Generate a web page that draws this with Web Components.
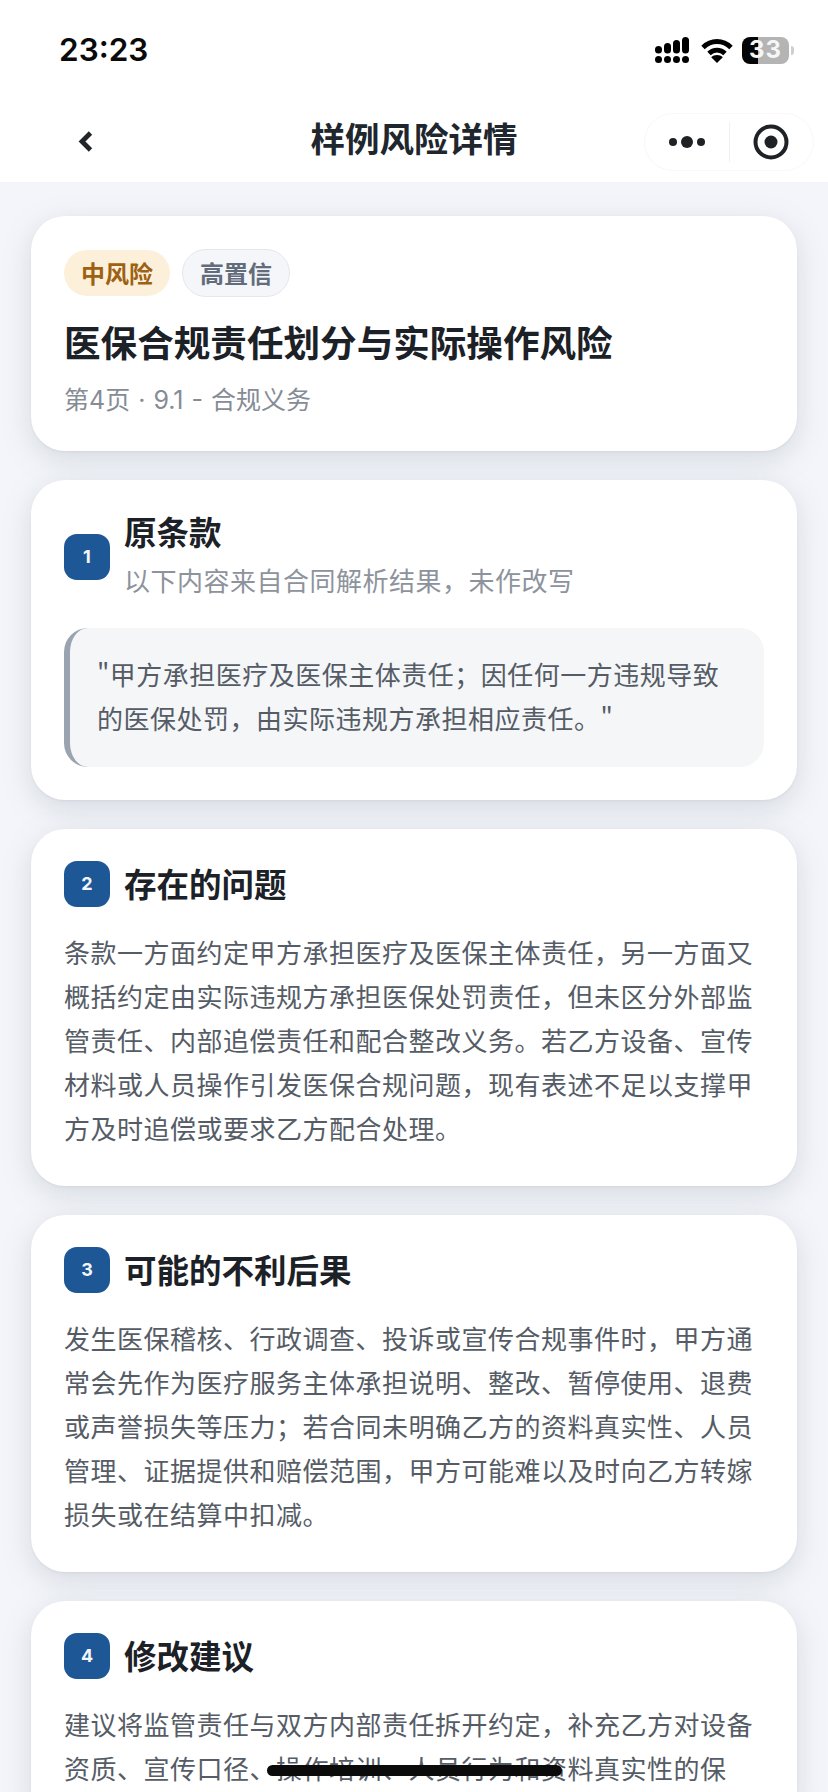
<!DOCTYPE html>
<html lang="zh-CN">
<head>
<meta charset="utf-8">
<title>样例风险详情</title>
<style>
html,body{margin:0;padding:0;background:#eef1f6;}
body{width:828px;height:1792px;overflow:hidden;font-family:"Noto Sans CJK SC","Noto Sans",sans-serif;}
</style>
</head>
<body>
<phone-page>
  <status-bar slot="top"></status-bar>
  <nav-bar slot="top">样例风险详情</nav-bar>
  <summary-card></summary-card>
  <section-card num="1" heading="原条款" sub="以下内容来自合同解析结果，未作改写">
    <clause-quote>"甲方承担医疗及医保主体责任；因任何一方违规导致的医保处罚，由实际违规方承担相应责任。"</clause-quote>
  </section-card>
  <section-card num="2" heading="存在的问题">条款一方面约定甲方承担医疗及医保主体责任，另一方面又概括约定由实际违规方承担医保处罚责任，但未区分外部监管责任、内部追偿责任和配合整改义务。若乙方设备、宣传材料或人员操作引发医保合规问题，现有表述不足以支撑甲方及时追偿或要求乙方配合处理。</section-card>
  <section-card num="3" heading="可能的不利后果">发生医保稽核、行政调查、投诉或宣传合规事件时，甲方通常会先作为医疗服务主体承担说明、整改、暂停使用、退费或声誉损失等压力；若合同未明确乙方的资料真实性、人员管理、证据提供和赔偿范围，甲方可能难以及时向乙方转嫁损失或在结算中扣减。</section-card>
  <section-card num="4" heading="修改建议">建议将监管责任与双方内部责任拆开约定，补充乙方对设备资质、宣传口径、操作培训、人员行为和资料真实性的保</section-card>
  <home-indicator slot="over"></home-indicator>
</phone-page>
<script>
function def(name, css, html){
  class E extends HTMLElement{
    constructor(){super();const r=this.attachShadow({mode:"open"});
      r.innerHTML="<style>"+css+"</style>"+(typeof html==="function"?html(this):html);}
  }
  customElements.define(name,E);
}
def("phone-page",`
:host{display:block;position:relative;width:828px;height:1792px;overflow:hidden;background:#f3f5fa;}
main{display:flex;flex-direction:column;gap:29px;padding:34px 31px 0;}
.top{position:relative;z-index:1;}
`,`<div class="top"><slot name="top"></slot></div><main><slot></slot></main><slot name="over"></slot>`);

def("status-bar",`
:host{display:flex;align-items:center;justify-content:space-between;height:90px;background:#fff;box-sizing:border-box;padding:10px 34px 0 59px;}
.t{font:600 31.5px/1 Inter,"Liberation Sans",sans-serif;color:#0a0a0a;}
.i{display:flex;align-items:center;}
.bat{width:47px;height:27px;border-radius:8px;background:linear-gradient(90deg,#050505 0 16px,#b4b4b4 16px);display:flex;align-items:center;justify-content:center;font:700 24px/1 Inter,"Liberation Sans",sans-serif;color:#f6f6f6;letter-spacing:1px;}
.wrap{display:flex;align-items:center;gap:2px;margin-left:9px;}
.nub{width:3px;height:9px;background:#cfcfcf;border-radius:0 3px 3px 0;}
svg{display:block;}
svg.w{margin-left:12px;}
`,`<span class="t">23:23</span><span class="i">
<svg width="34" height="26" viewBox="0 0 34 26" fill="#000">
<rect x="0" y="9" width="7" height="7.5" rx="3.5"/><circle cx="3.5" cy="22.5" r="3.5"/>
<rect x="9" y="6" width="7" height="10.5" rx="3.5"/><circle cx="12.5" cy="22.5" r="3.5"/>
<rect x="18" y="3" width="7" height="13.5" rx="3.5"/><circle cx="21.5" cy="22.5" r="3.5"/>
<rect x="27" y="0" width="7" height="16.5" rx="3.5"/><circle cx="30.5" cy="22.5" r="3.5"/>
</svg>
<svg class="w" width="32" height="25" viewBox="0 0 32 25" fill="none" stroke="#000" stroke-width="4.8">
<path d="M2 9.5C10 1.5 22 1.5 30 9.5"/><path d="M8 15.5C12.5 11 19.5 11 24 15.5"/><path d="M16 25l-5.8-5.8c3-2.8 8.6-2.8 11.6 0z" fill="#000" stroke="none"/>
</svg>
<span class="wrap"><span class="bat">33</span><span class="nub"></span></span>
</span>`);

def("nav-bar",`
:host{display:flex;align-items:center;justify-content:center;position:relative;height:92px;background:#fff;font:700 34.5px/1 "Noto Sans CJK SC",sans-serif;color:#20262d;}
.t{position:relative;top:1px;}
.back{position:absolute;left:78px;top:41px;}
.cap{position:absolute;left:644px;top:23px;width:170px;height:58px;box-sizing:border-box;border:1px solid #f8f8f9;border-radius:29px;display:flex;align-items:center;}
.a{flex:1;display:flex;align-items:center;justify-content:center;gap:4px;height:40px;}
.d{width:8px;height:8px;border-radius:50%;background:#1e2125;}
.d.m{width:12px;height:12px;}
.sep{width:1px;height:40px;background:#eff0f0;}
.b{flex:1;display:flex;justify-content:center;}
svg{display:block;}
`,`<svg class="back" width="15" height="21" viewBox="0 0 15 21" fill="none" stroke="#22262b" stroke-width="4.8"><path d="M12.5 2L4 10.5l8.5 8.5"/></svg>
<span class="t"><slot></slot></span>
<div class="cap"><div class="a"><i class="d"></i><i class="d m"></i><i class="d"></i></div><div class="sep"></div><div class="b">
<svg width="36" height="36" viewBox="0 0 36 36"><circle cx="18" cy="18" r="15.5" fill="none" stroke="#1e2125" stroke-width="4"/><circle cx="18" cy="18" r="6.5" fill="#1e2125"/></svg></div></div>`);

const cardBox=`display:block;box-sizing:border-box;background:#fff;border-radius:34px;box-shadow:0 8px 28px rgba(130,140,150,.26),0 1px 2px rgba(130,140,150,.12);`;

def("summary-card",`
:host{${cardBox}padding:33px 33px 32px;height:235px;}
.p{display:flex;gap:12px;align-items:center;}
.pill{height:46px;box-sizing:border-box;border-radius:23px;padding:0 17px;display:flex;align-items:center;font:700 24px/1 "Noto Sans CJK SC",sans-serif;}
.m{background:#fdf0da;color:#9c6113;}
.h{background:#f4f6f9;color:#626c7a;border:1.5px solid #e4e7ec;height:48px;border-radius:24px;}
h1{margin:20px 0 0;font:700 36.6px/50px "Noto Sans CJK SC",sans-serif;color:#1c2127;}
.s{margin-top:15px;font:400 25px/36px Inter,"Noto Sans CJK SC",sans-serif;word-spacing:1px;color:#858c96;}
`,`<div class="p"><span class="pill m">中风险</span><span class="pill h">高置信</span></div>
<h1>医保合规责任划分与实际操作风险</h1>
<div class="s">第4页 · 9.1 - 合规义务</div>`);

def("section-card",`
:host{${cardBox}padding:32px 33px 36px;font:400 26px/44px "Noto Sans CJK SC",sans-serif;letter-spacing:.5px;color:#555c66;}
:host([sub]){padding-bottom:33px;}
.head{display:flex;align-items:center;gap:14px;margin-bottom:23px;}
:host([sub]) .head{margin-bottom:26px;}
.n{flex:none;width:46px;height:46px;border-radius:13px;background:#1d5796;color:#f2f6fb;display:flex;align-items:center;justify-content:center;font:700 18px/1 Inter,"Liberation Sans",sans-serif;letter-spacing:0;}
.tt{padding-bottom:2px;}
:host([sub]) .tt{padding-bottom:4px;}
h2{margin:0;font:700 32.5px/42px "Noto Sans CJK SC",sans-serif;color:#1c2127;letter-spacing:0;}
:host([sub]) h2{margin-top:-2px;}
.sub{font:400 26px/36px "Noto Sans CJK SC",sans-serif;color:#8d939c;letter-spacing:.5px;margin-top:10px;}
`,el=>{
  const sub=el.getAttribute("sub");
  return `<div class="head"><span class="n">${el.getAttribute("num")}</span><div class="tt"><h2>${el.getAttribute("heading")}</h2>${sub?`<div class="sub">${sub}</div>`:""}</div></div><slot></slot>`;
});

def("clause-quote",`
:host{display:block;box-sizing:border-box;background:#f4f6f8;border-left:6px solid #9aa3b0;border-radius:24px;padding:24px 28px 27px 27px;font:400 26px/44px "Noto Sans CJK SC",sans-serif;letter-spacing:.5px;color:#555c66;}
`,`<slot></slot>`);

def("home-indicator",`
:host{position:absolute;left:267px;top:1765px;width:295px;height:11px;border-radius:6px;background:#0b0b0b;}
`,``);
</script>
</body>
</html>
